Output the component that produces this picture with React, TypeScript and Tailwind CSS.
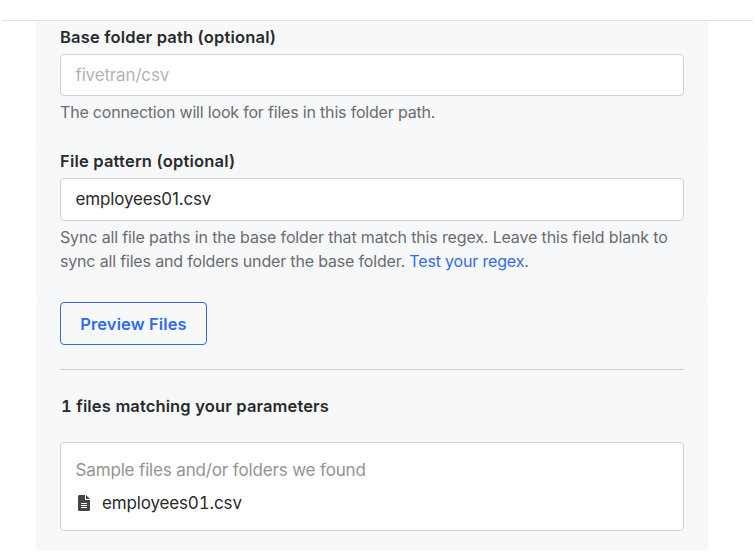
export default function App() {
  return (
    <div className="h-[552px] w-[755px] overflow-hidden bg-white font-['Inter',sans-serif] text-[17px] leading-6 text-[#292a2d]">
      <header className="mx-0.5 h-[21px] border-b border-[#dfe0e6]" />
      <main className="ml-9 w-[672px]">
        <section className="h-[127px] rounded-b-[4px] bg-[#f7f8fa] px-6 pt-1">
          <label className="block h-[29px] text-[16.5px] font-semibold tracking-[0.18px]"><span>Base folder path (optional)</span></label>
          <div className="flex h-[42px] items-center rounded-[4px] border border-[#cdd1dc] bg-white px-[14.5px] tracking-[-0.15px] text-[#b2b3b9]">
            <span>fivetran/csv</span>
          </div>
          <p className="mt-1 whitespace-nowrap text-[16px] tracking-[-0.19px] text-[#6b6c70]"><span>The connection will look for files in this folder path.</span></p>
        </section>
        <section className="h-[150px] rounded-[4px] bg-[#f7f8fa] px-6 pt-px">
          <label className="block h-[29px] text-[16.5px] font-semibold tracking-[0.2px]"><span>File pattern (optional)</span></label>
          <div className="flex h-[43px] items-center rounded-[4px] border border-[#cdd1dc] bg-white px-[14.5px] pb-px tracking-[-0.15px]">
            <span>employees01.csv</span>
          </div>
          <p className="mt-1 whitespace-nowrap text-[16px] text-[#6b6c70]">
            <span className="tracking-[-0.145px]">Sync all file paths in the base folder that match this regex. Leave this field blank to</span>
            <br />
            <span className="tracking-[-0.172px]">sync all files and folders under the base folder. <a className="text-[#306bea]">Test your regex</a>.</span>
          </p>
        </section>
        <section className="h-[252px] rounded-t-[4px] bg-[#f7f8fa] px-6 pt-1">
          <button className="flex h-[43px] w-[147px] items-center justify-center rounded-[4px] border border-[#306bea] text-[16.5px] font-semibold tracking-[0.13px] text-[#306bea]">
            <span>Preview Files</span>
          </button>
          <hr className="mt-6 border-[#cfd0d4]" />
          <h2 className="mt-6 pl-px text-[16.5px] font-semibold tracking-[0.11px] tabular-nums"><span>1 files matching your parameters</span></h2>
          <div className="mt-6 h-[89px] rounded-[4px] border border-[#cdd1dc] bg-white px-[14.5px] pt-[15px] tracking-[-0.15px]">
            <p className="text-[#929396]"><span>Sample files and/or folders we found</span></p>
            <div className="mt-[9px] flex items-center">
              <svg className="ml-[2.5px] h-4 w-3" viewBox="0 0 12 16" fill="none">
                <path d="M1.5 0H7v5h5v9.500c0 .9-.6 1.500-1.500 1.500h-9C.6 16 0 15.400 0 14.500v-13C0 .6.6 0 1.500 0Z" fill="#444548" />
                <path d="M8 0l4 4H8Z" fill="#444548" />
                <path d="M3 8.500h6M3 10.500h6M3 12.500h6" stroke="white" />
              </svg>
              <span className="ml-3 tabular-nums">employees01.csv</span>
            </div>
          </div>
        </section>
      </main>
    </div>
  );
}
